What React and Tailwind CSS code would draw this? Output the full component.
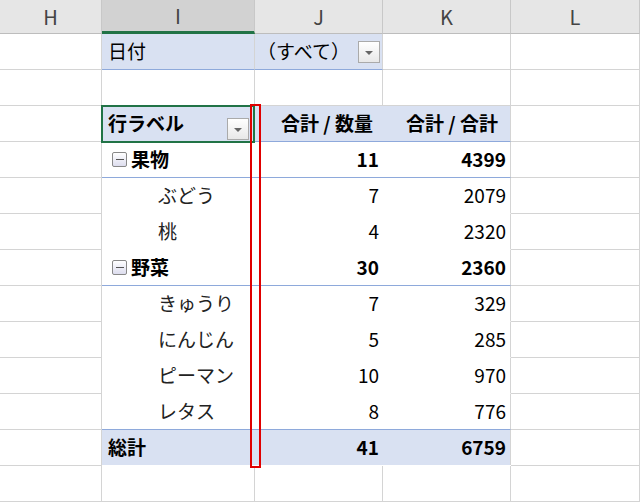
const cols = "grid grid-cols-[102px_153px_128px_128px_129px]";
const F = { fontFamily: '"Noto Sans CJK JP","Noto Sans",sans-serif' };

function Drop() {
  return (
    <div className="w-[22px] h-[22px] border border-[#aaa] bg-gradient-to-b from-white to-[#e8e8e8] flex items-center justify-center">
      <div className="w-0 h-0 border-l-[4px] border-r-[4px] border-t-[4px] border-l-transparent border-r-transparent border-t-[#666] mt-[3px]" />
    </div>
  );
}
function Minus() {
  return (
    <div className="w-[15px] h-[15px] border border-[#888] rounded-[2px] bg-gradient-to-b from-white to-[#dde] flex items-center justify-center mr-[4px]">
      <div className="w-[8px] h-[1px] bg-[#555]" />
    </div>
  );
}

const g = "border-r border-b border-[#d4d4d4]";
const Cell = ({ c = "", children }) => (
  <div className={`h-[36px] flex items-center ${c}`}>{children}</div>
);

const items = [
  { cat: "果物", q: 11, t: 4399, line: true },
  { name: "ぶどう", q: 7, t: 2079 },
  { name: "桃", q: 4, t: 2320 },
  { cat: "野菜", q: 30, t: 2360, line: true },
  { name: "きゅうり", q: 7, t: 329 },
  { name: "にんじん", q: 5, t: 285 },
  { name: "ピーマン", q: 10, t: 970 },
  { name: "レタス", q: 8, t: 776 },
];

export default function App() {
  return (
    <div className="relative w-[640px] h-[503px] overflow-hidden bg-white text-[19px] text-black" style={F}>
      <div className={`${cols} h-[34px] bg-[#e6e6e6] text-[#444] text-[20px]`}>
        {["H", "I", "J", "K", "L"].map((h, i) => (
          <div key={h} className={`flex items-center justify-center border-r border-[#c8c8c8] ${i === 1 ? "bg-[#d2d2d2] border-b-[3px] border-b-[#217346]" : "border-b border-b-[#bdbdbd]"}`}>{h}</div>
        ))}
      </div>
      <div className={cols}>
        <Cell c={g} />
        <Cell c="bg-[#d9e1f2] border-b border-[#8ea9db] border-r border-r-[#d4d4d4] pl-[6px]">日付</Cell>
        <Cell c="bg-[#d9e1f2] border-b border-[#8ea9db] justify-between pl-[2px] pr-[2px] border-r border-r-[#d4d4d4]"><span>（すべて）</span><Drop /></Cell>
        <Cell c={g} /><Cell c={g} />
      </div>
      <div className={cols}>
        {[0, 1, 2, 3, 4].map(i => <Cell key={i} c={g} />)}
      </div>
      <div className={cols}>
        <Cell c={g} />
        <Cell c="bg-[#d9e1f2] border-b border-[#8ea9db] font-bold pl-[6px] justify-between pr-[6px]"><span>行ラベル</span><div className="mt-[10px]"><Drop /></div></Cell>
        <Cell c="bg-[#d9e1f2] border-b border-[#8ea9db] font-bold justify-end pr-[10px] whitespace-nowrap">合計 / 数量</Cell>
        <Cell c="bg-[#d9e1f2] border-b border-[#8ea9db] font-bold justify-end pr-[12px] whitespace-nowrap border-r border-r-[#d4d4d4]">合計 / 合計</Cell>
        <Cell c={g} />
      </div>
      {items.map((it, i) => {
        const b = it.line ? "border-b border-[#8ea9db]" : "border-b border-transparent";
        return (
          <div key={i} className={cols}>
            <Cell c={g} />
            <Cell c={`${b} ${it.cat ? "font-bold pl-[10px]" : "pl-[56px] text-[#222]"}`}>
              {it.cat && <Minus />}{it.cat || it.name}
            </Cell>
            <Cell c={`${b} justify-end pr-[4px] ${it.cat ? "font-bold" : ""}`}>{it.q}</Cell>
            <Cell c={`${b} justify-end pr-[4px] border-r border-r-[#d4d4d4] ${it.cat ? "font-bold" : ""}`}>{it.t}</Cell>
            <Cell c={g} />
          </div>
        );
      })}
      <div className={cols}>
        <Cell c={g} />
        <Cell c="bg-[#d9e1f2] border-t border-[#8ea9db] font-bold pl-[6px] -mt-px">総計</Cell>
        <Cell c="bg-[#d9e1f2] border-t border-[#8ea9db] font-bold justify-end pr-[4px] -mt-px">41</Cell>
        <Cell c="bg-[#d9e1f2] border-t border-[#8ea9db] font-bold justify-end pr-[4px] -mt-px border-r border-r-[#d4d4d4]">6759</Cell>
        <Cell c={g} />
      </div>
      <div className={cols}>
        {[0, 1, 2, 3, 4].map(i => <Cell key={i} c={g} />)}
      </div>
      <div className="absolute left-[101px] top-[105px] w-[154px] h-[38px] border-[2px] border-[#217346] pointer-events-none" />
      <div className="absolute left-[250px] top-[104px] w-[11px] h-[364px] border-[2px] border-[#e00000] pointer-events-none" />
    </div>
  );
}
